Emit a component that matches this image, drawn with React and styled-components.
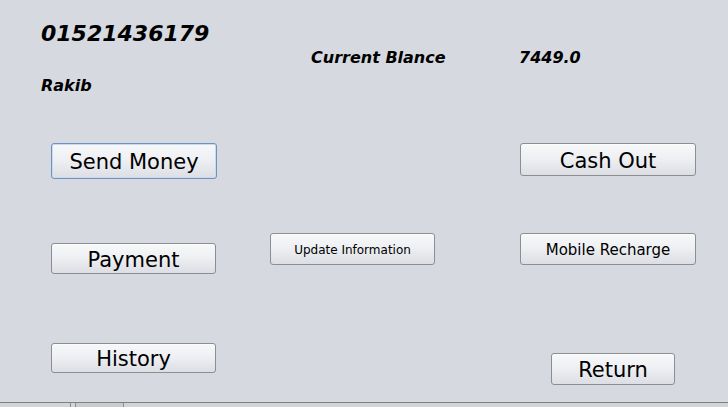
import React from 'react';
import styled, { createGlobalStyle } from 'styled-components';

const Global = createGlobalStyle`
  html, body {
    margin: 0;
    padding: 0;
    overflow: hidden;
    background: #d6d9df;
  }
  * {
    box-sizing: border-box;
  }
`;

const Frame = styled.div`
  width: 728px;
  height: 407px;
  display: flex;
  flex-direction: column;
  background: #d6d9df;
  font-family: 'DejaVu Sans', 'Liberation Sans', sans-serif;
  color: #000;
`;

const Header = styled.div`
  height: 143px;
  display: flex;
  align-items: flex-start;
  padding: 23px 0 0 41px;
`;

const Account = styled.div`
  width: 270px;
  display: flex;
  flex-direction: column;
`;

const Phone = styled.div`
  font-size: 22px;
  line-height: 1;
  font-weight: bold;
  font-style: oblique;
`;

const Name = styled.div`
  margin-top: 33px;
  font-size: 16px;
  line-height: 1;
  font-weight: bold;
  font-style: oblique;
`;

const Balance = styled.div`
  margin-top: 27px;
  display: flex;
  font-size: 16px;
  line-height: 1;
  font-weight: bold;
  font-style: oblique;
`;

const BalanceLabel = styled.span`
  width: 208px;
`;

const Panel = styled.div`
  flex: 1;
  display: grid;
  grid-template-columns: 219px 250px 1fr;
  grid-template-rows: 90px 110px 1fr;
  padding-left: 51px;
  align-items: start;
`;

const Button = styled.button`
  grid-column: ${(p) => p.$col};
  grid-row: ${(p) => p.$row};
  width: ${(p) => p.$w}px;
  height: ${(p) => p.$h}px;
  margin-top: ${(p) => p.$top || 0}px;
  margin-left: ${(p) => p.$left || 0}px;
  display: flex;
  align-items: center;
  justify-content: center;
  padding: 2px 0 0;
  font-family: 'DejaVu Sans', 'Liberation Sans', sans-serif;
  font-size: ${(p) => p.$size}px;
  color: #000;
  border: 1px solid ${(p) => (p.$focused ? '#6f93bf' : '#8b8e93')};
  border-radius: 3px;
  background: linear-gradient(#f7f8fa 0%, #eef0f3 45%, #dcdee4 100%);
  box-shadow: ${(p) => (p.$focused ? 'inset 0 0 0 1px #c9dbf0' : 'inset 0 1px 0 #fbfbfc')};
  cursor: default;
`;

const Footer = styled.div`
  height: 5px;
  border-top: 1px solid #7d7f83;
  background: #d2d4d8;
  display: flex;
  align-items: stretch;
  padding-left: 70px;
`;

const Tick = styled.span`
  width: ${(p) => p.$w}px;
  border-left: 1px solid #8a8c90;
  background: ${(p) => p.$bg || 'transparent'};
`;

export default function App() {
  return (
    <>
      <Global />
      <Frame>
        <Header>
          <Account>
            <Phone>01521436179</Phone>
            <Name>Rakib</Name>
          </Account>
          <Balance>
            <BalanceLabel>Current Blance</BalanceLabel>
            <span>7449.0</span>
          </Balance>
        </Header>
        <Panel>
          <Button $col={1} $row={1} $w={166} $h={36} $size={21} $focused>
            Send Money
          </Button>
          <Button $col={3} $row={1} $w={176} $h={33} $size={21}>
            Cash Out
          </Button>
          <Button $col={1} $row={2} $w={165} $h={31} $size={21} $top={10}>
            Payment
          </Button>
          <Button $col={2} $row={2} $w={165} $h={32} $size={12}>
            Update Information
          </Button>
          <Button $col={3} $row={2} $w={176} $h={32} $size={15}>
            Mobile Recharge
          </Button>
          <Button $col={1} $row={3} $w={165} $h={30} $size={21}>
            History
          </Button>
          <Button $col={3} $row={3} $w={124} $h={32} $size={21} $top={10} $left={31}>
            Return
          </Button>
        </Panel>
        <Footer>
          <Tick $w={5} />
          <Tick $w={48} $bg="#c9cbcf" />
          <Tick $w={20} />
        </Footer>
      </Frame>
    </>
  );
}
